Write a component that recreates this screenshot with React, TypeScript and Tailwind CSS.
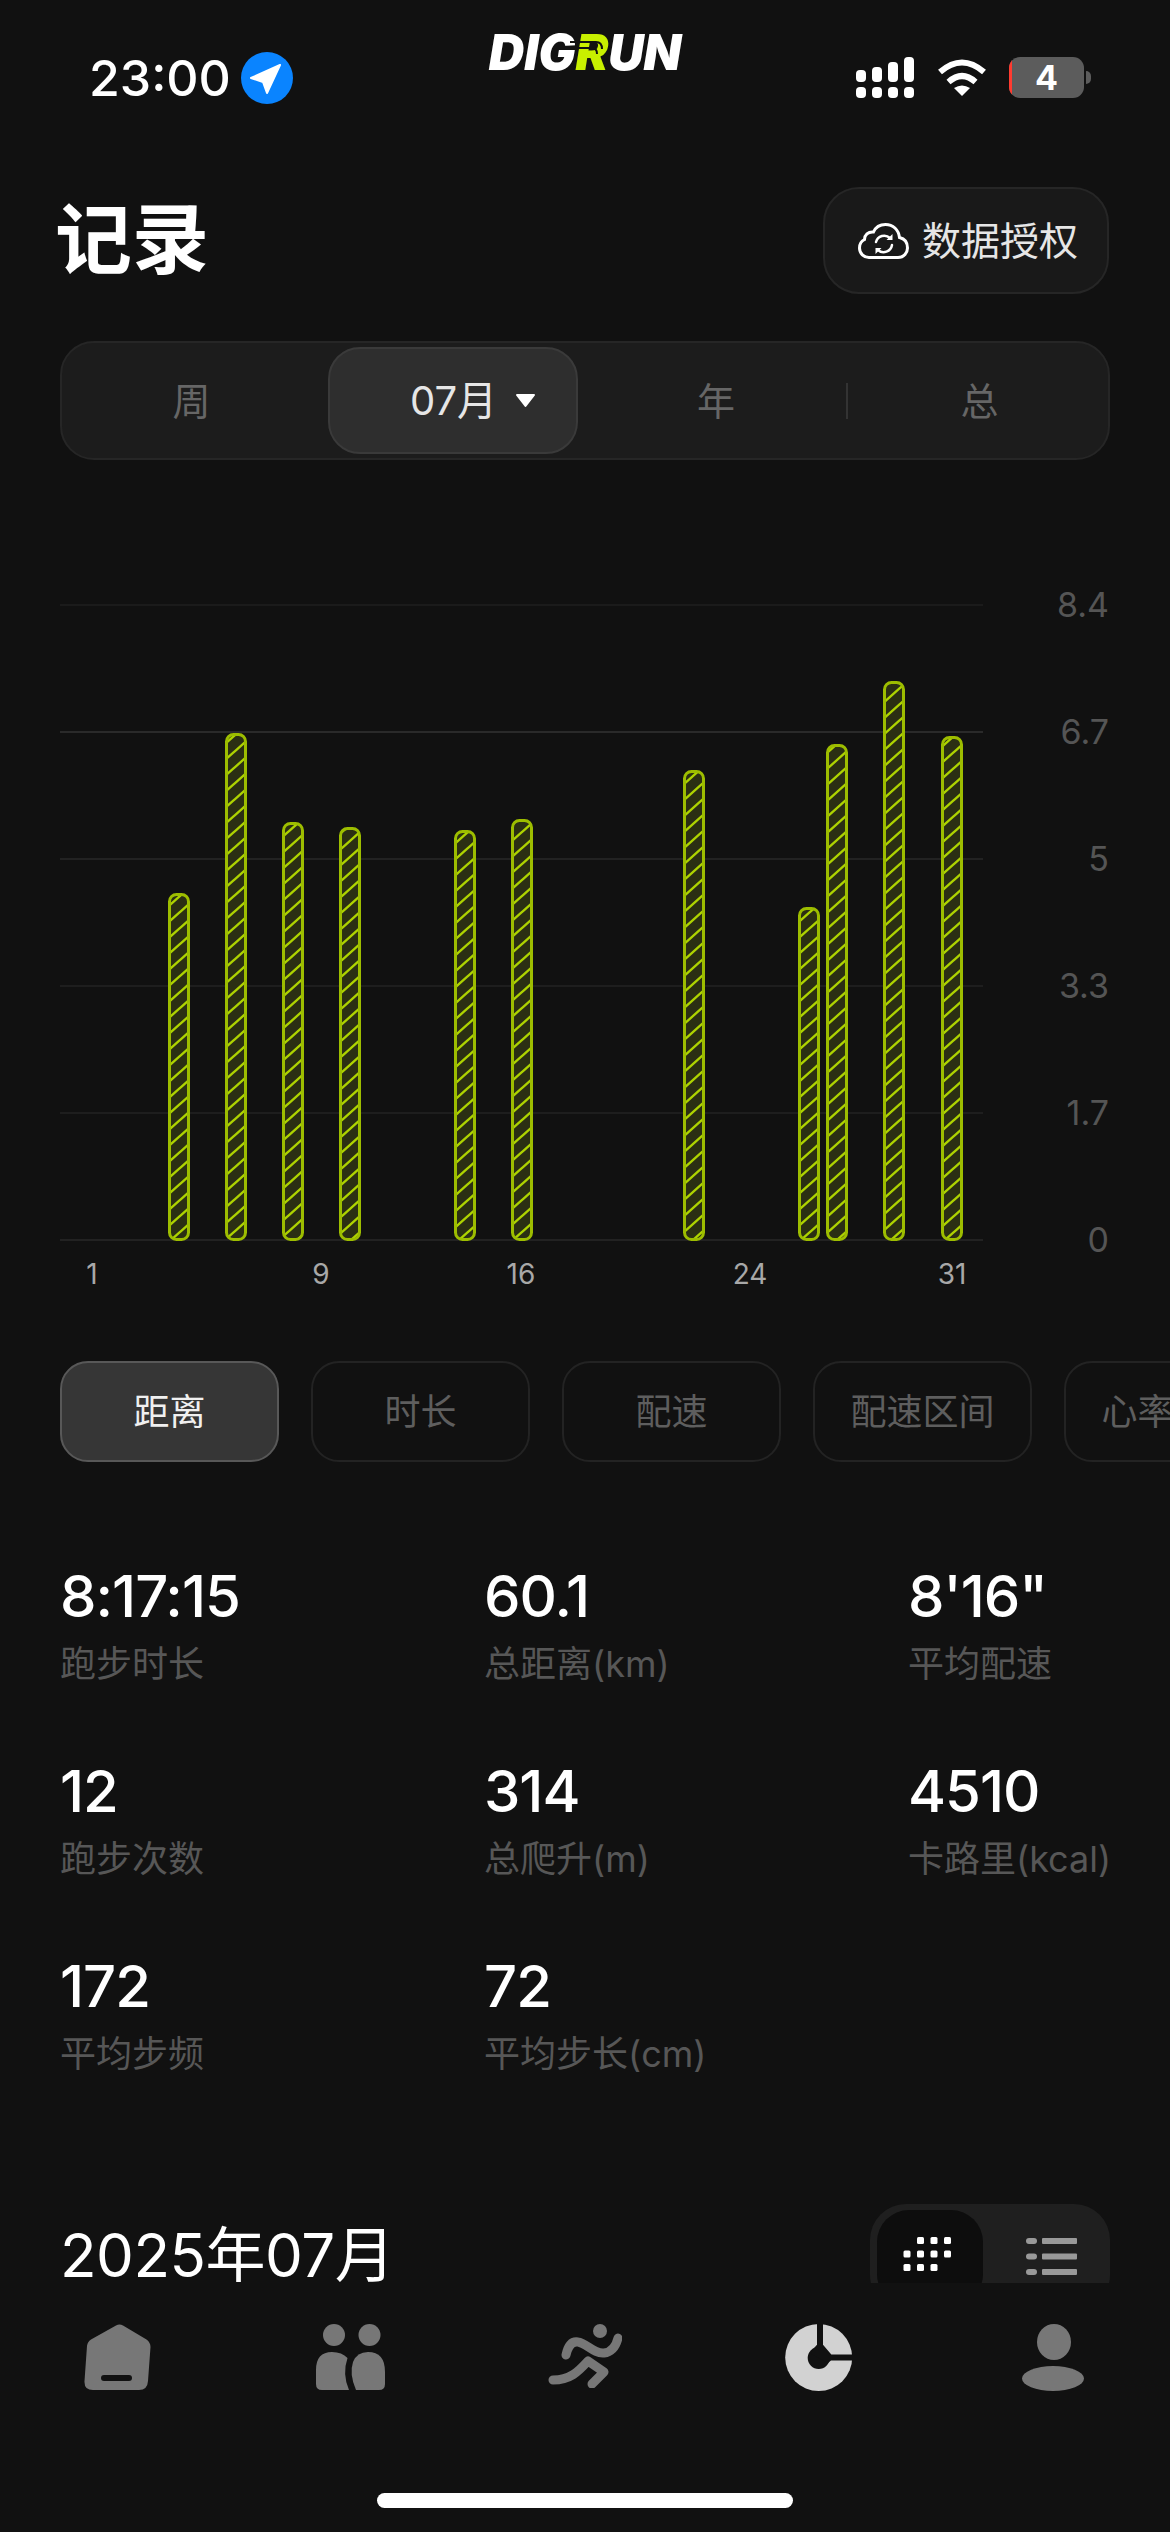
const bars = [
  { x: 179, top: 893 },
  { x: 236, top: 733 },
  { x: 293, top: 822 },
  { x: 350, top: 827 },
  { x: 465, top: 830 },
  { x: 522, top: 819 },
  { x: 694, top: 770 },
  { x: 809, top: 907 },
  { x: 837, top: 744 },
  { x: 894, top: 681 },
  { x: 952, top: 736 },
];

const gridLines = [
  { y: 605, label: "8.4", color: "#1b1b1b" },
  { y: 732, label: "6.7", color: "#2a2a2a" },
  { y: 859, label: "5", color: "#222222" },
  { y: 986, label: "3.3", color: "#1e1e1e" },
  { y: 1113, label: "1.7", color: "#1e1e1e" },
  { y: 1240, label: "0", color: "#222222" },
];

const xLabels = [
  { x: 92, label: "1" },
  { x: 321, label: "9" },
  { x: 521, label: "16" },
  { x: 750, label: "24" },
  { x: 952, label: "31" },
];

const metrics = ["距离", "时长", "配速", "配速区间", "心率区间"];

const stats = [
  { value: "8:17:15", label: "跑步时长" },
  { value: "60.1", label: "总距离(km)" },
  { value: "8'16\"", label: "平均配速" },
  { value: "12", label: "跑步次数" },
  { value: "314", label: "总爬升(m)" },
  { value: "4510", label: "卡路里(kcal)" },
  { value: "172", label: "平均步频" },
  { value: "72", label: "平均步长(cm)" },
];

function StatusBar() {
  return (
    <div className="grid h-[187px] grid-cols-[1fr_auto_1fr] items-start">
      <div className="ml-[89px] mt-[52px] flex h-[52px] items-center gap-[10px]">
        <span className="text-[50px] font-medium leading-none text-white">23:00</span>
        <svg width="52" height="52" viewBox="0 0 52 52">
          <circle cx="26" cy="26" r="26" fill="#0a84ff" />
          <path d="M39 13 L10 26 L22 30 L26 41 Z" fill="white" stroke="white" strokeWidth="2" strokeLinejoin="round" />
        </svg>
      </div>
      <div className="relative mt-[28px] h-[50px] w-[198px] whitespace-nowrap text-center text-[49px] font-black italic leading-[50px] tracking-[0px] text-white">
        DIG<span className="text-[#c8f000]">R</span>UN
        <svg className="absolute left-[80px] top-[10px]" width="44" height="20" viewBox="0 0 44 20" fill="none">
          <path d="M4 4 H30 Q36 4 36 11" stroke="#111111" strokeWidth="2" />
          <path d="M3 10 H26 Q31 10 31 16" stroke="#111111" strokeWidth="2" />
        </svg>
      </div>
      <div className="mr-[79px] mt-[57px] flex items-start justify-end">
        <svg width="58" height="41" viewBox="0 0 58 41" fill="white">
          <rect x="0" y="13" width="10" height="12" rx="4" />
          <rect x="16" y="10" width="10" height="15" rx="4" />
          <rect x="32" y="5" width="10" height="20" rx="4" />
          <rect x="48" y="0" width="10" height="25" rx="4" />
          <rect x="0" y="30" width="10" height="11" rx="4" />
          <rect x="16" y="30" width="10" height="11" rx="4" />
          <rect x="32" y="30" width="10" height="11" rx="4" />
          <rect x="48" y="30" width="10" height="11" rx="4" />
        </svg>
        <svg className="ml-[23px] mt-[2px]" width="50" height="37" viewBox="0 0 50 37" fill="none">
          <path d="M3 13 Q25 -6 47 13" stroke="white" strokeWidth="6" />
          <path d="M11.5 23 Q25 11 38.5 23" stroke="white" strokeWidth="6" />
          <path d="M17 29 Q25 24 33 29 L25 37 Z" fill="white" />
        </svg>
        <div className="relative ml-[22px] flex h-[41px] w-[75px] items-center justify-center overflow-hidden rounded-[11px] bg-[#5c5c5c] text-[34px] font-bold leading-none text-white">
          <div className="absolute bottom-0 left-0 top-0 w-[3px] bg-[#ff3b30]" />
          4
        </div>
        <div className="ml-[2px] mt-[14px] h-[13px] w-[5px] rounded-r-full bg-[#5c5c5c]" />
      </div>
    </div>
  );
}

function CloudIcon() {
  return (
    <svg width="51" height="36" viewBox="0 0 51 36" fill="none" stroke="white" strokeWidth="3" strokeLinecap="round">
      <path d="M11 34.5 H40 C46 34.5 49.5 29.5 49.5 25 C49.5 19 46 15.5 41.5 14.5 C40.5 6.5 35 1.5 27.5 1.5 C21.5 1.5 17.5 4.5 15.5 9 C10 8.5 6.5 12 6.5 16.5 C3.5 18 1.5 21 1.5 25 C1.5 30.5 6 34.5 11 34.5 Z" />
      <path d="M18 19 A8.5 8.5 0 0 1 32 15" strokeWidth="2.5" />
      <path d="M34 22 A8.5 8.5 0 0 1 20 27" strokeWidth="2.5" />
      <path d="M34.5 11 L34.5 17 L28.5 17 Z" fill="white" stroke="none" />
      <path d="M17.5 31 L17.5 25 L23.5 25 Z" fill="white" stroke="none" />
    </svg>
  );
}

function Header() {
  return (
    <div className="flex h-[107px] items-center justify-between pl-[55px] pr-[61px]">
      <h1 className="text-[77px] font-semibold leading-none text-white">记录</h1>
      <button className="flex h-[107px] w-[286px] items-center gap-[13px] rounded-[36px] border-2 border-[#262626] bg-[#191919] pl-[33px] text-[39px] leading-none text-[#e6e6e6]">
        <CloudIcon />
        数据授权
      </button>
    </div>
  );
}

function PeriodTabs() {
  return (
    <div className="mx-[60px] mt-[47px] flex h-[119px] w-[1050px] items-center rounded-[34px] border-2 border-[#262626] bg-[#1c1c1c] text-[38px] leading-none text-[#666666]">
      <div className="w-[259px] text-center">周</div>
      <div className="ml-[7px] flex h-[107px] w-[250px] items-center gap-[18px] rounded-[32px] border-2 border-[#3a3a3a] bg-[#2e2e2e] pl-[80px] text-[40px] text-[#e6e6e6]">
        <span>07月</span>
        <svg width="21" height="15" viewBox="0 0 21 15">
          <path d="M2 2 H19 L10.5 13 Z" fill="white" stroke="white" strokeWidth="2" strokeLinejoin="round" />
        </svg>
      </div>
      <div className="w-[268px] pl-[8px] text-center">年</div>
      <div className="h-[36px] w-[2px] bg-[#333333]" />
      <div className="flex-1 pl-[3px] text-center">总</div>
    </div>
  );
}

function Chart() {
  return (
    <svg className="mt-[100px] block" width="1170" height="740" viewBox="0 560 1170 740" fill="none">
      <defs>
        <pattern id="hatch" patternUnits="userSpaceOnUse" width="18" height="16">
          <rect width="18" height="16" fill="#2b2f13" />
          <path d="M-4.5 4 L4.5 -4 M0 16 L18 0 M13.5 20 L22.5 12" stroke="#aed300" strokeWidth="2.4" />
        </pattern>
      </defs>
      {gridLines.map((line) => (
        <g key={line.label}>
          <line x1="60" x2="983" y1={line.y} y2={line.y} stroke={line.color} strokeWidth="2" />
          <text x="1109" y={line.y + 12} textAnchor="end" fontSize="34" fill="#555555">
            {line.label}
          </text>
        </g>
      ))}
      {bars.map((bar) => (
        <rect
          key={bar.x}
          x={bar.x - 9.5}
          y={bar.top + 1.5}
          width="19"
          height={1238 - bar.top}
          rx="7"
          fill="url(#hatch)"
          stroke="#9dbd00"
          strokeWidth="3"
        />
      ))}
      {xLabels.map((item) => (
        <text key={item.label} x={item.x} y="1284" textAnchor="middle" fontSize="28" fill="#a8a8a8">
          {item.label}
        </text>
      ))}
    </svg>
  );
}

function MetricTabs() {
  return (
    <div className="mt-[61px] flex gap-[32px] overflow-hidden pl-[60px]">
      {metrics.map((name, i) => (
        <div
          key={name}
          className={`flex h-[101px] w-[219px] shrink-0 items-center justify-center rounded-[28px] border-2 text-[36px] leading-none ${
            i === 0 ? "border-[#585858] bg-[#363636] text-[#f0f0f0]" : "border-[#232323] text-[#5e5e5e]"
          }`}
        >
          {name}
        </div>
      ))}
    </div>
  );
}

function Stats() {
  return (
    <div className="mt-[100px] grid grid-cols-[424px_424px_1fr] gap-y-[68px] pl-[60px]">
      {stats.map((stat) => (
        <div key={stat.label}>
          <div className="h-[68px] text-[58px] font-medium leading-[68px] tracking-[-1px] text-white">{stat.value}</div>
          <div className="mt-[9px] h-[50px] text-[36px] leading-[50px] text-[#575757]">{stat.label}</div>
        </div>
      ))}
    </div>
  );
}

function MonthHeader() {
  return (
    <div className="mt-[125px] flex items-start justify-between pl-[60px] pr-[60px]">
      <div className="mt-[15px] text-[60px] leading-[72px] tracking-[-0.5px] text-white">2025年07月</div>
      <div className="h-[107px] w-[240px] rounded-[36px] bg-[#1f1f1f] pl-[7px] pt-[6px]">
        <div className="flex">
          <div className="h-[96px] w-[106px] rounded-[32px] bg-[#0d0d0d] pt-[27px]">
            <svg className="ml-[26px]" width="54" height="42" viewBox="0 0 54 42" fill="white">
              <rect x="14" y="0" width="7" height="7" rx="1.5" />
              <rect x="27.5" y="0" width="7" height="7" rx="1.5" />
              <rect x="41" y="0" width="7" height="7" rx="1.5" />
              <rect x="0.5" y="13.5" width="7" height="7" rx="1.5" />
              <rect x="14" y="13.5" width="7" height="7" rx="1.5" />
              <rect x="27.5" y="13.5" width="7" height="7" rx="1.5" />
              <rect x="41" y="13.5" width="7" height="7" rx="1.5" />
              <rect x="0.5" y="27" width="7" height="7" rx="1.5" />
              <rect x="14" y="27" width="7" height="7" rx="1.5" />
              <rect x="27.5" y="27" width="7" height="7" rx="1.5" />
            </svg>
          </div>
          <div className="h-[65px] overflow-hidden pl-[43px] pt-[28px]">
            <svg width="52" height="37" viewBox="0 0 52 37" fill="#999999">
              <rect x="0" y="0" width="11" height="6" rx="3" />
              <rect x="16" y="0" width="35" height="6" rx="1" />
              <rect x="0" y="15.5" width="11" height="6" rx="3" />
              <rect x="16" y="15.5" width="35" height="6" rx="1" />
              <rect x="0" y="31" width="11" height="6" rx="3" />
              <rect x="16" y="31" width="35" height="6" rx="1" />
            </svg>
          </div>
        </div>
      </div>
    </div>
  );
}

function TabBar() {
  return (
    <div className="grid h-[107px] grid-cols-5 items-start justify-items-center pt-[41px]">
      <svg width="67" height="66" viewBox="0 0 67 66" fill="#777777">
        <path d="M32 1.5 Q35.5 -0.5 39 1.5 L62.5 15.5 Q66.5 18.5 66.5 23 L64 57 Q63.5 66 55 66 L9 66 Q0 66 0.5 57 L3 22 Q3.5 17.5 7 15.5 Z" />
        <rect x="17" y="51" width="31" height="6" rx="3" fill="#111111" />
      </svg>
      <svg width="70" height="66" viewBox="0 0 70 66" fill="#777777">
        <circle cx="18" cy="11" r="11" />
        <circle cx="53.5" cy="11" r="11" />
        <path d="M0 60 L0 46 Q0 28 16 28 Q26 28 31.5 34 Q26 50 33 66 L6 66 Q0 66 0 60 Z" />
        <path d="M40 66 Q33 50 37 38 Q41 28 52 28 Q69 28 69 48 L69 60 Q69 66 63 66 Z" />
      </svg>
      <svg width="74" height="64" viewBox="0 0 74 64" fill="none" stroke="#777777" strokeWidth="9" strokeLinecap="round" strokeLinejoin="round">
        <circle cx="52" cy="7" r="7" fill="#777777" stroke="none" />
        <path d="M18 31 C20 22 24 17 30 18 C38 19 46 30 56 29 C64 28 68 22 70 14" />
        <path d="M5 56 C22 56 30 48 40 37 L56 48 L44 60" />
      </svg>
      <svg width="68" height="67" viewBox="0 0 68 67">
        <circle cx="33.7" cy="33.5" r="33.5" fill="#d2d2d2" />
        <circle cx="33.7" cy="34" r="11" fill="#111111" />
        <polygon points="32,-1 38,-1 38,20.7 46.3,30.6 69,30.6 69,36.6 46,36.6 43,39 33.7,34 24.6,29 32,20.7" fill="#111111" />
      </svg>
      <svg width="62" height="67" viewBox="0 0 62 67" fill="#777777">
        <ellipse cx="32" cy="18" rx="17" ry="18" />
        <ellipse cx="31" cy="54.5" rx="31" ry="12.5" />
      </svg>
    </div>
  );
}

export default function App() {
  return (
    <div className="h-[2532px] w-[1170px] overflow-hidden bg-[#111111] font-['Inter','Noto_Sans_CJK_SC',sans-serif]">
      <div className="h-[2283px] overflow-hidden">
        <StatusBar />
        <Header />
        <PeriodTabs />
        <Chart />
        <MetricTabs />
        <Stats />
        <MonthHeader />
      </div>
      <TabBar />
      <div className="mx-auto mt-[103px] h-[15px] w-[416px] rounded-full bg-white" />
    </div>
  );
}
